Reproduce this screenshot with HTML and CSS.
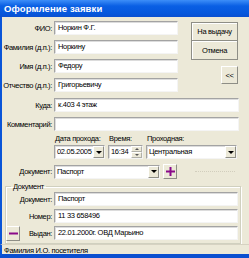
FILE: index.html
```html
<!DOCTYPE html>
<html lang="ru">
<head>
  <meta charset="UTF-8">
  <title>Оформление заявки</title>
  <link rel="stylesheet" href="styles.css">
</head>
<body>

<div class="window">
  <div class="titlebar">Оформление заявки</div>

  <div class="content">
    <div class="top">
      <div class="rows top-rows">
        <label>ФИО:</label><div class="field">Норкин Ф.Г.</div>
        <label>Фамилия (д.п.):</label><div class="field">Норкину</div>
        <label>Имя (д.п.):</label><div class="field">Федору</div>
        <label>Отчество (д.п.):</label><div class="field">Григорьевичу</div>
      </div>
      <div class="side">
        <div class="btn-group">
          <div class="btn">На выдачу</div>
          <div class="btn">Отмена</div>
        </div>
        <div class="btn small">&lt;&lt;</div>
      </div>
    </div>

    <div class="rows wide-rows">
      <label>Куда:</label><div class="field">к.403 4 этаж</div>
      <label>Комментарий:</label><div class="field"></div>
    </div>

    <div class="pass">
      <span class="cap">Дата прохода:</span>
      <span class="cap">Время:</span>
      <span class="cap">Проходная:</span>
      <div class="field combo">02.05.2005<span class="drop"><i class="tri-down"></i></span></div>
      <div class="field combo">16:34<span class="spin"><span><i class="tri-up"></i></span><span><i class="tri-down"></i></span></span></div>
      <div class="field combo">Центральная<span class="drop"><i class="tri-down"></i></span></div>
    </div>

    <div class="doc-row">
      <label>Документ:</label>
      <div class="field combo doc-select">Паспорт<span class="drop"><i class="tri-down"></i></span></div>
      <div class="btn icon-btn">
        <svg width="9" height="9" viewBox="0 0 9 9"><path d="M4.5 0v9M0 4.5h9" stroke="#8a0a8a" stroke-width="2"/></svg>
      </div>
      <div class="dots"></div>
    </div>

    <fieldset class="group">
      <legend>Документ</legend>
      <div class="rows group-rows">
        <label>Документ:</label><div class="field">Паспорт</div>
        <label>Номер:</label><div class="field">11 33 658496</div>
        <div class="minus-cell">
          <div class="btn icon-btn">
            <svg width="9" height="9" viewBox="0 0 9 9"><path d="M0 4.5h9" stroke="#8a0a8a" stroke-width="2"/></svg>
          </div>
          <label>Выдан:</label>
        </div>
        <div class="field">22.01.2000г. ОВД Марьино</div>
      </div>
    </fieldset>
  </div>

  <div class="status">Фамилия И.О. посетителя</div>
</div>

</body>
</html>
```

FILE: styles.css
```css
body {
  margin: 0;
  font-family: "Liberation Sans", Arial, sans-serif;
  font-size: 7.5px;
  letter-spacing: -0.3px;
  color: #000;
}
.window {
  width: 249px;
  height: 258px;
  display: flex;
  flex-direction: column;
  background: #ece9d8;
  border-bottom: 4px solid #0a4fd0;
  box-sizing: border-box;
}
.titlebar {
  height: 17px;
  line-height: 17px;
  padding-left: 4px;
  color: #fff;
  font-size: 9.5px;
  font-weight: bold;
  letter-spacing: 0.1px;
  background: linear-gradient(#3d8ef8, #0a5fe4 35%, #0657dc 80%, #0a4fd0);
}
.content {
  flex: 1;
  border-left: 2px solid #0a55d8;
  padding-top: 4px;
}
.rows {
  display: grid;
  column-gap: 2px;
  row-gap: 5px;
  grid-auto-rows: 14px;
  align-items: center;
}
.rows label {
  text-align: right;
  white-space: nowrap;
  letter-spacing: -0.35px;
}
.top {
  display: flex;
}
.top-rows {
  grid-template-columns: 50px 124px;
}
.wide-rows {
  grid-template-columns: 50px 185px;
  margin-top: 6px;
}
.field {
  height: 14px;
  box-sizing: border-box;
  background: #fff;
  border: 1px solid;
  border-color: #a3a3a3 #f4f4f4 #f4f4f4 #a3a3a3;
  box-shadow: inset 1px 1px 0 #dcdcdc;
  padding-left: 3px;
  line-height: 12px;
  white-space: nowrap;
  overflow: hidden;
}
.side {
  margin-left: 13px;
  width: 47px;
  display: flex;
  flex-direction: column;
  align-items: flex-end;
}
.btn {
  background: #ece9d8;
  border: 1px solid #8e8e86;
  box-shadow: inset 1px 1px 0 #fff;
  box-sizing: border-box;
  display: flex;
  align-items: center;
  justify-content: center;
}
.btn-group {
  margin-top: 1px;
  width: 47px;
}
.btn-group .btn {
  height: 19px;
}
.btn-group .btn + .btn {
  border-top: none;
}
.btn.small {
  width: 17px;
  height: 18px;
  margin-top: 6px;
  border-color: #fff #8e8e86 #8e8e86 #fff;
  box-shadow: none;
}
.pass {
  display: grid;
  grid-template-columns: 51px 35px 91px;
  column-gap: 3px;
  row-gap: 2px;
  margin-top: 3px;
  margin-left: 52px;
  grid-template-rows: 9px 14px;
}
.cap {
  line-height: 9px;
  padding-left: 1px;
  white-space: nowrap;
}
.combo {
  position: relative;
  padding-left: 2px;
  padding-right: 12px;
}
.drop, .spin {
  position: absolute;
  right: 0;
  top: 0;
  bottom: 0;
  width: 11px;
}
.drop {
  background: #ece9d8;
  border: 1px solid;
  border-color: #fff #8e8e86 #8e8e86 #fff;
  box-sizing: border-box;
  display: flex;
  align-items: center;
  justify-content: center;
}
.spin {
  display: flex;
  flex-direction: column;
}
.spin span {
  flex: 1;
  background: #ece9d8;
  border: 1px solid;
  border-color: #fff #b0b0a8 #b0b0a8 #fff;
  display: flex;
  align-items: center;
  justify-content: center;
}
.tri-down {
  width: 0;
  height: 0;
  border-left: 3px solid transparent;
  border-right: 3px solid transparent;
  border-top: 3px solid #000;
}
.tri-up {
  width: 0;
  height: 0;
  border-left: 2px solid transparent;
  border-right: 2px solid transparent;
  border-bottom: 2px solid #555;
}
.spin .tri-down {
  border-left-width: 2px;
  border-right-width: 2px;
  border-top: 2px solid #555;
}
.doc-row {
  display: flex;
  align-items: center;
  margin-top: 5px;
  height: 15px;
}
.doc-row label {
  width: 50px;
  text-align: right;
  margin-right: 2px;
}
.doc-select {
  width: 106px;
}
.icon-btn {
  width: 14px;
  height: 15px;
  border-color: #fff #8e8e86 #8e8e86 #fff;
  box-shadow: none;
}
.doc-row .icon-btn {
  margin-left: 3px;
}
.dots {
  margin-left: 18px;
  width: 40px;
  border-top: 1px dotted #d2cebd;
}
.group {
  margin: 3px 8px 0 3px;
  padding: 0 0 3px 0;
  border: 1px solid #d0d0bf;
  box-shadow: 1px 1px 0 #fff, inset 1px 1px 0 #fff;
}
.group legend {
  margin-left: 5px;
  padding: 0 2px;
  line-height: 9px;
}
.group-rows {
  grid-template-columns: 46px 184px;
  row-gap: 3px;
  grid-auto-rows: 14px;
  margin-top: 1px;
}
.minus-cell {
  display: flex;
  align-items: center;
  justify-content: space-between;
}
.status {
  height: 11px;
  line-height: 11px;
  padding-left: 2px;
  border-top: 1px solid #d6d2c2;
  border-left: 2px solid #0a55d8;
}
```
